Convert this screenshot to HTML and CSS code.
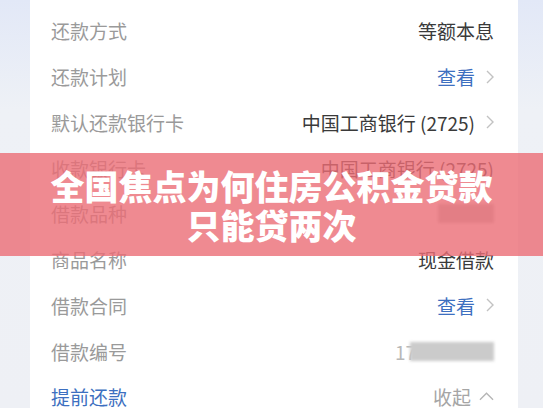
FILE: index.html
```html
<!DOCTYPE html>
<html lang="zh-CN">
<head>
    <meta charset="UTF-8">
    <meta name="viewport" content="width=device-width, initial-scale=1.0">
    <title>借款详情</title>
    <link rel="stylesheet" href="styles.css">
</head>
<body>
    <div class="page">
        <div class="card">
            <div class="row">
                <span class="label">还款方式</span>
                <span class="value">等额本息</span>
            </div>
            <div class="row">
                <span class="label">还款计划</span>
                <span class="value link">查看<svg class="chev" viewBox="0 0 8 14"><path d="M1 1l6 6-6 6"/></svg></span>
            </div>
            <div class="row">
                <span class="label">默认还款银行卡</span>
                <span class="value">中国工商银行 (2725)<svg class="chev" viewBox="0 0 8 14"><path d="M1 1l6 6-6 6"/></svg></span>
            </div>
            <div class="row">
                <span class="label">收款银行卡</span>
                <span class="value">中国工商银行 (2725)</span>
            </div>
            <div class="row">
                <span class="label">借款品种</span>
                <span class="value"><span class="smudge short"></span></span>
            </div>
            <div class="row">
                <span class="label">商品名称</span>
                <span class="value">现金借款</span>
            </div>
            <div class="row">
                <span class="label">借款合同</span>
                <span class="value link">查看<svg class="chev" viewBox="0 0 8 14"><path d="M1 1l6 6-6 6"/></svg></span>
            </div>
            <div class="row">
                <span class="label">借款编号</span>
                <span class="value number">17<span class="smudge long"></span></span>
            </div>
            <div class="row">
                <span class="label link">提前还款</span>
                <span class="value muted">收起<svg class="chev-up" viewBox="0 0 16 9"><path d="M1 8l7-7 7 7"/></svg></span>
            </div>
        </div>

        <!-- headline band across the card -->
        <div class="banner">
            <p>全国焦点为何住房公积金贷款</p>
            <p>只能贷两次</p>
        </div>
    </div>
</body>
</html>
```

FILE: styles.css
```css
body {
    margin: 0;
    padding: 0;
    background: linear-gradient(to bottom, #e2e8f7 0px, #eef1f6 110px, #eef0f5 100%);
    font-family: "Noto Sans CJK SC", "Noto Sans", sans-serif;
}
.page {
    position: relative;
    width: 543px;
    height: 408px;
    overflow: hidden;
    padding: 0 25px 0 30px;
    box-sizing: border-box;
}
.card {
    background-color: #fff;
    padding: 8px 24px 0 21px;
    height: 100%;
    box-sizing: border-box;
}
.row {
    display: flex;
    justify-content: space-between;
    align-items: center;
    height: 45.75px;
    font-size: 19px;
}
.label {
    color: #9a9a9a;
}
.value {
    display: flex;
    align-items: center;
    color: #3a3a3a;
}
.link {
    color: #3d6fc0;
}
.muted {
    color: #a5a5a5;
}
.chev {
    width: 8px;
    height: 14px;
    margin-left: 11px;
    fill: none;
    stroke: #c2c2c2;
    stroke-width: 1.4;
}
.chev-up {
    width: 15px;
    height: 9px;
    margin-left: 8px;
    fill: none;
    stroke: #b5b5b5;
    stroke-width: 1.4;
}
.number {
    color: #b8b8b8;
}
/* blurred-out private values */
.smudge {
    display: inline-block;
    height: 19px;
    background-color: #cbcbcb;
    filter: blur(1.5px);
}
.smudge.short {
    width: 56px;
    background-color: #c4c4c4;
}
.smudge.long {
    width: 84px;
    margin-left: -6px;
}
.banner {
    position: absolute;
    left: 0;
    right: 0;
    top: 153px;
    height: 103px;
    background-color: rgba(235, 109, 118, 0.8);
    display: flex;
    flex-direction: column;
    justify-content: center;
    align-items: center;
}
.banner p {
    margin: 0;
    color: #fff;
    font-size: 34px;
    font-weight: 900;
    line-height: 39px;
    letter-spacing: 0;
}
```
